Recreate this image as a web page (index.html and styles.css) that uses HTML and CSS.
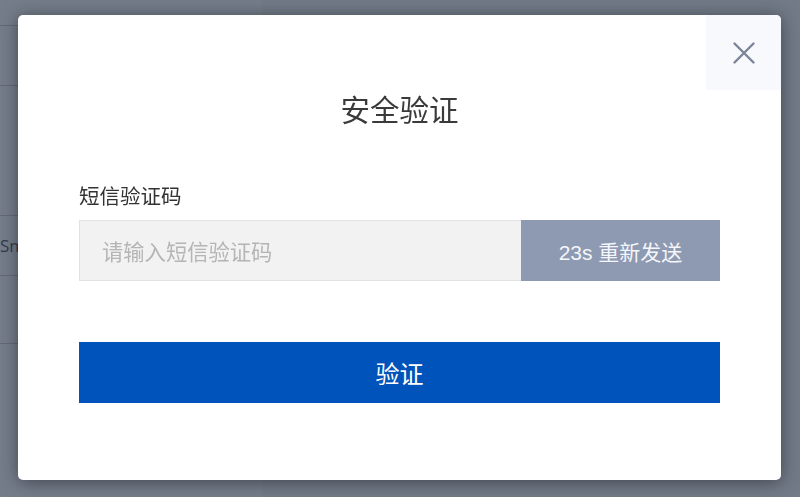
FILE: index.html
```html
<!DOCTYPE html>
<html lang="zh-CN">
<head>
<meta charset="utf-8">
<title>安全验证</title>
<link rel="stylesheet" href="styles.css">
</head>
<body>
<div class="page">
  <aside class="side">
    <div class="side-row"></div>
    <div class="side-row tall"></div>
    <div class="side-row"><span class="side-text">Smart</span></div>
    <div class="side-row mid"></div>
    <div class="side-row"></div>
  </aside>
  <main class="main"></main>
</div>
<div class="overlay">
  <div class="modal">
    <button class="close" aria-label="关闭">
      <svg width="22" height="22" viewBox="0 0 22 22"><path d="M1.5 1.5 L20.5 20.5 M20.5 1.5 L1.5 20.5" stroke="#7b8498" stroke-width="2.4" stroke-linecap="round" fill="none"/></svg>
    </button>
    <h1 class="title">安全验证</h1>
    <label class="label">短信验证码</label>
    <div class="field">
      <input class="input" type="text" placeholder="请输入短信验证码">
      <button class="resend">23s 重新发送</button>
    </div>
    <button class="submit">验证</button>
  </div>
</div>
</body>
</html>
```
FILE: styles.css
```css
* { box-sizing: border-box; }
html, body { margin: 0; padding: 0; height: 100%; }
body {
  font-family: "Noto Sans CJK SC", "Noto Sans", sans-serif;
  background: #7f8895;
  overflow: hidden;
}
.page {
  display: flex;
  height: 497px;
}
.side {
  width: 262px;
  padding-top: 25px;
  display: flex;
  flex-direction: column;
}
.side-row {
  height: 60px;
  border-top: 1px solid #6a727d;
  display: flex;
  align-items: center;
}
.side-row.tall { height: 130px; }
.side-row.mid { height: 68px; }
.side-text {
  color: #2e3b4c;
  font-family: "Open Sans", sans-serif;
  font-size: 17px;
}
.main { flex: 1; background: #7c8592; }
.overlay {
  position: fixed;
  inset: 0;
  display: flex;
  align-items: center;
  justify-content: center;
  background: rgba(60, 66, 76, 0.15);
}
.modal {
  position: relative;
  width: 763px;
  height: 465px;
  background: #fff;
  border-radius: 5px;
  box-shadow: 0 2px 18px rgba(20, 24, 32, 0.55);
  padding: 73px 61px 0;
  display: flex;
  flex-direction: column;
  margin: -2px 0 0 -1px;
}
.close {
  position: absolute;
  top: 0;
  right: 0;
  width: 75px;
  height: 75px;
  border: 0;
  padding: 0;
  background: #f8f9fc;
  border-top-right-radius: 5px;
  display: flex;
  align-items: center;
  justify-content: center;
}
.title {
  margin: 0;
  text-align: center;
  font-size: 29.5px;
  line-height: 40px;
  font-weight: 400;
  color: #3a3a3a;
}
.label {
  margin-top: 53px;
  font-size: 20.5px;
  line-height: 28px;
  color: #333;
}
.field {
  margin-top: 11px;
  display: flex;
  height: 61px;
}
.input {
  flex: 1;
  min-width: 0;
  height: 61px;
  border: 1px solid #e2e2e2;
  border-right: 0;
  background: #f2f2f2;
  padding: 0 22px;
  font-family: inherit;
  font-size: 21.3px;
  color: #333;
  outline: none;
}
.input::placeholder { color: #b5b5b5; }
.resend {
  width: 199px;
  border: 0;
  background: #8e99b2;
  color: #f4f6fa;
  font-family: "Liberation Sans", "Noto Sans CJK SC", sans-serif;
  font-size: 21px;
  padding: 0;
}
.submit {
  margin-top: 61px;
  height: 61px;
  border: 0;
  background: #0053ba;
  color: #fff;
  font-family: inherit;
  font-size: 24px;
  padding: 0;
}
```
